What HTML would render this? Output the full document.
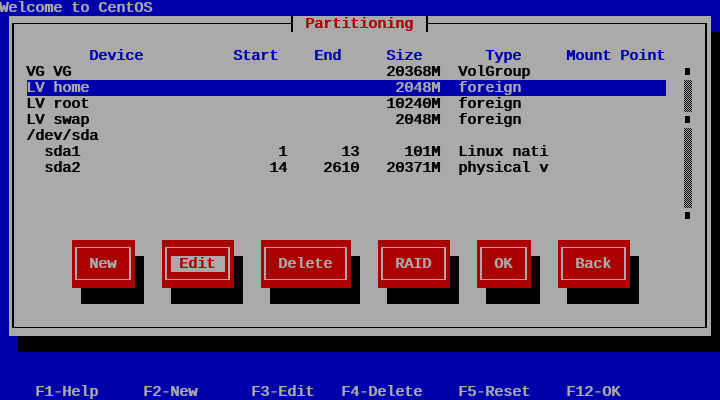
<!DOCTYPE html>
<html>
<head>
<meta charset="utf-8">
<title>Partitioning</title>
<style>
html,body{margin:0;padding:0;width:720px;height:400px;overflow:hidden;background:#0000aa}
#s{position:relative;width:720px;height:400px;overflow:hidden;background:#0000aa;font:normal 15px/16px "Liberation Mono",monospace;color:#aaa}
#s div,#s span,#s svg{position:absolute}
#s span{white-space:pre;height:16px;margin:1px 0 0 -1px;text-shadow:1px 0 0 currentColor}
.k{color:#000}
.b{color:#0000aa}
.g{color:#aaa}
.r{color:#a00}
.sh{background:#000}
.btn{background:#a00;height:48px;top:240px}
.fr{top:7px;height:31px;border:solid #aaa;border-width:1px 2px}
.sq{background:#000;left:685px;width:5px;height:7px}
</style>
</head>
<body>
<div id="s">
<span class="g" style="left:0;top:0">Welcome to CentOS</span>

<div class="sh" style="left:18px;top:32px;width:702px;height:320px"></div>
<div style="left:9px;top:16px;width:702px;height:320px;background:#aaa"></div>

<div class="sh" style="left:12px;top:23px;width:281px;height:1px"></div>
<div class="sh" style="left:426px;top:23px;width:281px;height:1px"></div>
<div class="sh" style="left:12px;top:23px;width:2px;height:305px"></div>
<div class="sh" style="left:705px;top:23px;width:2px;height:305px"></div>
<div class="sh" style="left:12px;top:327px;width:695px;height:1px"></div>
<div class="sh" style="left:291px;top:16px;width:2px;height:16px"></div>
<div class="sh" style="left:426px;top:16px;width:2px;height:16px"></div>
<span class="r" style="left:306px;top:16px">Partitioning</span>

<span class="b" style="left:90px;top:48px">Device</span>
<span class="b" style="left:234px;top:48px">Start</span>
<span class="b" style="left:315px;top:48px">End</span>
<span class="b" style="left:387px;top:48px">Size</span>
<span class="b" style="left:486px;top:48px">Type</span>
<span class="b" style="left:567px;top:48px">Mount Point</span>

<span class="k" style="left:27px;top:64px">VG VG</span>
<span class="k" style="left:387px;top:64px">20368M</span>
<span class="k" style="left:459px;top:64px">VolGroup</span>

<div style="left:27px;top:80px;width:639px;height:16px;background:#0000aa"></div>
<span class="g" style="left:27px;top:80px">LV home</span>
<span class="g" style="left:396px;top:80px">2048M</span>
<span class="g" style="left:459px;top:80px">foreign</span>

<span class="k" style="left:27px;top:96px">LV root</span>
<span class="k" style="left:387px;top:96px">10240M</span>
<span class="k" style="left:459px;top:96px">foreign</span>

<span class="k" style="left:27px;top:112px">LV swap</span>
<span class="k" style="left:396px;top:112px">2048M</span>
<span class="k" style="left:459px;top:112px">foreign</span>

<span class="k" style="left:27px;top:128px">/dev/sda</span>

<span class="k" style="left:45px;top:144px">sda1</span>
<span class="k" style="left:279px;top:144px">1</span>
<span class="k" style="left:342px;top:144px">13</span>
<span class="k" style="left:405px;top:144px">101M</span>
<span class="k" style="left:459px;top:144px">Linux nati</span>

<span class="k" style="left:45px;top:160px">sda2</span>
<span class="k" style="left:270px;top:160px">14</span>
<span class="k" style="left:324px;top:160px">2610</span>
<span class="k" style="left:387px;top:160px">20371M</span>
<span class="k" style="left:459px;top:160px">physical v</span>

<div class="sq" style="top:68px"></div>
<svg style="left:684px;top:80px" width="8" height="128" viewBox="0 0 8 128" shape-rendering="crispEdges">
<defs><pattern id="c" width="2" height="2" patternUnits="userSpaceOnUse"><rect width="2" height="2" fill="#aaa"/><rect width="1" height="1" fill="#000"/><rect x="1" y="1" width="1" height="1" fill="#000"/></pattern></defs>
<rect width="8" height="32" fill="url(#c)"/>
<rect y="48" width="8" height="80" fill="url(#c)"/>
</svg>
<div class="sq" style="top:116px"></div>
<div class="sq" style="top:212px"></div>

<div class="sh" style="left:81px;top:256px;width:63px;height:48px"></div>
<div class="btn" style="left:72px;width:63px"><div class="fr" style="left:3px;width:52px"></div></div>
<span class="g" style="left:90px;top:256px">New</span>

<div class="sh" style="left:171px;top:256px;width:72px;height:48px"></div>
<div class="btn" style="left:162px;width:72px"><div class="fr" style="left:3px;width:61px"></div></div>
<div style="left:171px;top:256px;width:54px;height:16px;background:#aaa"></div>
<span class="r" style="left:180px;top:256px">Edit</span>

<div class="sh" style="left:270px;top:256px;width:90px;height:48px"></div>
<div class="btn" style="left:261px;width:90px"><div class="fr" style="left:3px;width:79px"></div></div>
<span class="g" style="left:279px;top:256px">Delete</span>

<div class="sh" style="left:387px;top:256px;width:72px;height:48px"></div>
<div class="btn" style="left:378px;width:72px"><div class="fr" style="left:3px;width:61px"></div></div>
<span class="g" style="left:396px;top:256px">RAID</span>

<div class="sh" style="left:486px;top:256px;width:54px;height:48px"></div>
<div class="btn" style="left:477px;width:54px"><div class="fr" style="left:3px;width:43px"></div></div>
<span class="g" style="left:495px;top:256px">OK</span>

<div class="sh" style="left:567px;top:256px;width:72px;height:48px"></div>
<div class="btn" style="left:558px;width:72px"><div class="fr" style="left:3px;width:61px"></div></div>
<span class="g" style="left:576px;top:256px">Back</span>

<span class="g" style="left:36px;top:384px">F1-Help</span>
<span class="g" style="left:144px;top:384px">F2-New</span>
<span class="g" style="left:252px;top:384px">F3-Edit</span>
<span class="g" style="left:342px;top:384px">F4-Delete</span>
<span class="g" style="left:459px;top:384px">F5-Reset</span>
<span class="g" style="left:567px;top:384px">F12-OK</span>
</div>
</body>
</html>
